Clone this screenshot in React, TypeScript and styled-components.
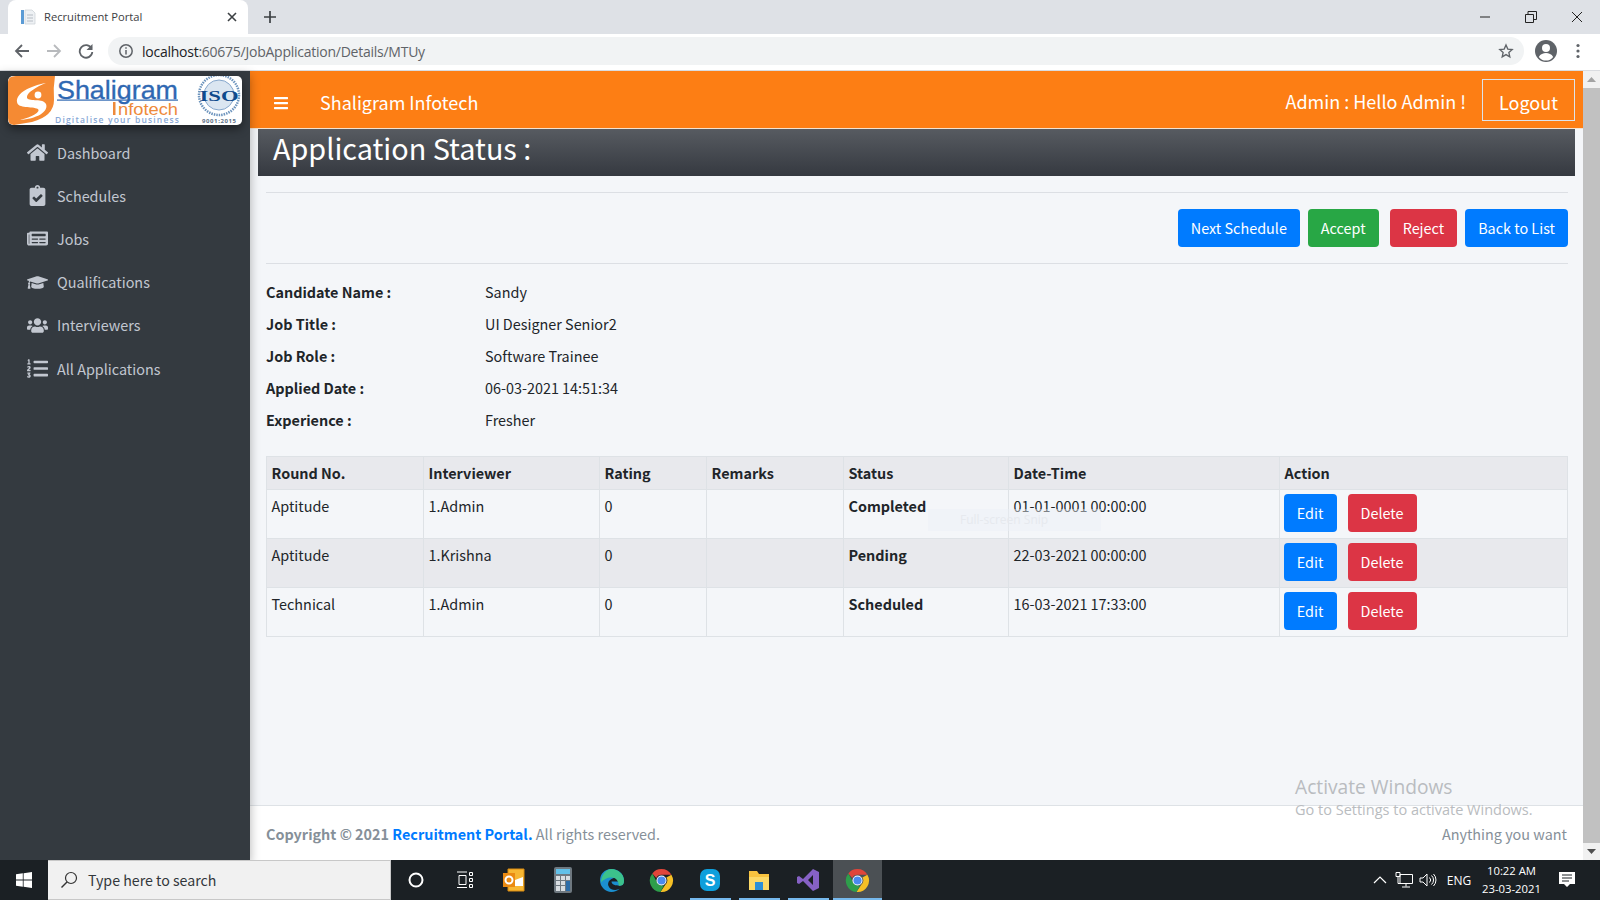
import React from "react";
import styled, { createGlobalStyle } from "styled-components";
import { FaHome, FaClipboardCheck, FaNewspaper, FaGraduationCap, FaUsers, FaListOl, FaBars } from "react-icons/fa";

const Global = createGlobalStyle`
  html, body { margin: 0; padding: 0; height: 100%; overflow: hidden; }
  body { font-family: "Noto Sans CJK SC", "Noto Sans", sans-serif; background: #fff; }
  * { box-sizing: border-box; }
`;
const Screen = styled.div`width:1600px;height:900px;display:flex;flex-direction:column;position:relative;overflow:hidden;`;

const TabStrip = styled.div`height:34px;background:#dee1e6;display:flex;align-items:flex-end;padding-left:8px;flex:none;`;
const Tab = styled.div`width:240px;height:34px;background:#fff;border-radius:8px 8px 0 0;display:flex;align-items:center;padding:0 8px 0 12px;gap:8px;
  font:11.2px "Open Sans","Noto Sans",sans-serif;color:#3c4043;`;
const TabTitle = styled.span`flex:1;white-space:nowrap;margin-top:-1px;`;
const NewTab = styled.div`width:44px;height:34px;display:flex;align-items:center;justify-content:center;`;
const WinControls = styled.div`margin-left:auto;height:34px;display:flex;align-items:center;`;
const WinBtn = styled.div`width:46px;height:28px;display:flex;align-items:center;justify-content:center;`;
const Toolbar = styled.div`height:37px;background:#fff;border-bottom:1px solid #dadce0;display:flex;align-items:center;padding:0 8px 2px 0;flex:none;`;
const NavIcon = styled.div`width:32px;height:28px;display:flex;align-items:center;justify-content:center;`;
const NavIcons = styled.div`display:flex;padding-left:6px;`;
const Omnibox = styled.div`flex:1;height:28px;margin-left:6px;background:#f1f3f4;border-radius:14px;display:flex;align-items:center;padding:0 10px 0 10px;
  font:14px "Open Sans","Noto Sans",sans-serif;letter-spacing:-.25px;color:#5f6368;`;
const Host = styled.span`color:#202124;margin-left:8px;`;
const OmniStar = styled.div`margin-left:auto;display:flex;`;
const Account = styled.div`display:flex;align-items:center;gap:18px;padding:0 12px 0 10px;`;

const Body = styled.div`flex:1;display:flex;min-height:0;`;
const Sidebar = styled.aside`width:250px;background:#343a40;flex:none;padding:5px 8px 0;position:relative;z-index:2;box-shadow:0 4px 10px rgba(0,0,0,.3);display:flex;flex-direction:column;`;
const LogoBox = styled.div`height:49px;width:234px;background:#fff;border-radius:5px;box-shadow:0 4px 10px rgba(0,0,0,.45);overflow:hidden;flex:none;margin-bottom:6px;`;
const Menu = styled.nav`display:flex;flex-direction:column;`;
const MenuItem = styled.a`height:43.2px;display:flex;align-items:center;color:#c2c7d0;font-size:14.4px;line-height:22px;`;
const MenuIcon = styled.span`width:49px;display:flex;justify-content:center;padding-left:9px;font-size:21px;color:#c2c7d0;`;

const Main = styled.div`flex:1;display:flex;flex-direction:column;min-width:0;background:#f4f6f9;position:relative;`;
const Navbar = styled.header`height:58px;background:#fd7e14;border-bottom:1px solid #f4e2d0;display:flex;align-items:center;padding:0 8px 0 23px;color:#fff;flex:none;`;
const Burger = styled(FaBars)`margin-top:6px;`;
const Brand = styled.span`font-size:18px;line-height:27px;margin-left:31px;padding-top:6px;`;
const Hello = styled.span`margin-left:auto;font-size:18px;line-height:27px;margin-right:16px;padding-top:4px;`;
const Logout = styled.button`width:93px;height:42px;border:1px solid #dde3ea;background:transparent;color:#fff;font:18px/27px "Noto Sans CJK SC","Noto Sans",sans-serif;padding:5px 0 0;`;
const Content = styled.main`flex:1;padding:0 15px 0 16px;display:flex;flex-direction:column;`;
const TitleBar = styled.h1`margin:0 -7px 0 -8px;height:47px;background:linear-gradient(#575b61,#353940);color:#fff;font-weight:400;font-size:28.8px;line-height:38px;padding:0 0 0 15px;flex:none;`;
const Rule = styled.hr`border:0;border-top:1px solid #dcdfe4;margin:0;flex:none;width:100%;`;
const TopRule = styled(Rule)`margin-top:16px;`;
const Actions = styled.div`display:flex;justify-content:flex-end;padding:16px 0;`;
const Btn = styled.button<{ $c: string; $ml?: number }>`height:38px;padding:0 13px;border:0;border-radius:4px;background:${p => p.$c};color:#fff;
  font:14.4px/24px "Noto Sans CJK SC","Noto Sans",sans-serif;margin-left:${p => p.$ml ?? 0}px;`;
const Details = styled.dl`display:grid;grid-template-columns:219px 1fr;grid-auto-rows:32px;margin:11px 0 21px;align-items:center;color:#212529;font-size:14.4px;`;
const Dt = styled.dt`font-weight:700;`;
const Dd = styled.dd`margin:0;`;
const Table = styled.table`width:1301px;border-collapse:collapse;table-layout:fixed;font-size:14.4px;color:#212529;`;
const Th = styled.th<{ $w: number }>`width:${p => p.$w}px;height:33px;background:#e8e9ed;border:1px solid #dee2e6;text-align:left;padding:0 5px 2px 4.5px;font-weight:700;`;
const Tr = styled.tr<{ $alt?: boolean }>`height:49px;background:${p => p.$alt ? "#e8e9ed" : "transparent"};`;
const Td = styled.td<{ $bold?: boolean }>`border:1px solid #dee2e6;padding:4px 5px 5px 4.5px;vertical-align:top;line-height:24px;font-weight:${p => p.$bold ? 700 : 400};`;
const ActionTd = styled(Td)`padding-left:3.5px;`;
const ActionCell = styled.div`display:flex;gap:11px;`;
const RowBtn = styled(Btn)<{ $w: number }>`padding:0;width:${p => p.$w}px;`;
const Footer = styled.footer`height:55px;background:#fff;border-top:1px solid #dee2e6;display:flex;align-items:center;justify-content:space-between;padding:0 16px;color:#869099;font-size:14.4px;flex:none;position:relative;`;
const Strong = styled.strong`font-weight:700;`;
const FootLink = styled.a`color:#007bff;font-weight:700;`;
const Scrollbar = styled.div`width:17px;background:#f1f1f1;flex:none;display:flex;flex-direction:column;align-items:center;`;
const ScrollArrow = styled.div`height:17px;display:flex;align-items:center;justify-content:center;flex:none;`;
const ScrollThumb = styled.div`flex:1;width:100%;background:#c1c1c1;`;

const Watermark = styled.div`position:absolute;left:1295px;top:774px;color:#b9bcc0;z-index:4;font-family:"Open Sans","Noto Sans",sans-serif;pointer-events:none;`;
const WmTitle = styled.div`font-size:19.2px;line-height:26px;`;
const WmSub = styled.div`font-size:14.5px;line-height:20px;`;
const Snip = styled.div`position:absolute;left:928px;top:509px;width:173px;height:22px;padding-left:32px;background:rgba(235,240,247,.45);color:#e6e9ee;font:12px/22px "Open Sans",sans-serif;z-index:4;pointer-events:none;`;

const Taskbar = styled.div`height:40px;background:#1b2024;display:flex;align-items:center;flex:none;color:#fff;position:relative;z-index:5;`;
const StartBtn = styled.div`width:48px;height:40px;display:flex;align-items:center;justify-content:center;`;
const SearchBox = styled.div`width:343px;height:40px;background:#f1f1f1;border:1px solid #c8c8c8;border-width:1px 1px 1px 0;display:flex;align-items:center;gap:10px;padding-left:12px;color:#33373b;font:14.2px "Noto Sans CJK SC","Noto Sans",sans-serif;`;
const TaskIcon = styled.div<{ $on?: boolean; $open?: boolean }>`width:49.1px;height:40px;display:flex;align-items:center;justify-content:center;position:relative;background:${p => p.$on ? "#4b5054" : "transparent"};
  &::after{content:"";display:${p => p.$open ? "block" : "none"};position:absolute;left:${p => p.$on ? 0 : 4}px;right:${p => p.$on ? 0 : 4}px;bottom:0;height:2px;background:#76b9ed;}`;
const Tray = styled.div`margin-left:auto;display:flex;align-items:center;height:40px;`;
const TrayIcon = styled.div`width:24px;display:flex;justify-content:center;`;
const Lang = styled.div`font:12px "Open Sans",sans-serif;width:38px;text-align:center;`;
const Clock = styled.div`font:11.3px/18px "Open Sans",sans-serif;text-align:center;width:67px;`;
const Notif = styled.div`width:55px;display:flex;justify-content:center;padding-right:11px;`;

const Logo = () => (
  <svg width="234" height="49" viewBox="0 0 234 49">
    <path d="M0 6 Q0 0 8 0 H47 Q45 12 46 24 Q46 40 24 46 L6 49 Q0 49 0 42Z" fill="#f58a33" />
    <path d="M38 7 C22 10 8 17 9 26 C10 33 24 30 30 33 C33 36 24 41 12 44 C28 43 41 36 38 28 C35 22 22 26 19 22 C18 17 28 11 38 7Z" fill="#fff" />
    <circle cx="30" cy="19" r="3.400" fill="#fff" />
    <text x="49" y="22.500" fontFamily="Liberation Sans, sans-serif" fontSize="25" fill="#2f68b2" stroke="#2f68b2" strokeWidth=".3" textLength="121" lengthAdjust="spacingAndGlyphs">Shaligram</text>
    <rect x="49" y="23.500" width="121" height="1.200" fill="#2f68b2" />
    <rect x="105" y="26" width="2.500" height="13" fill="#ee8a3a" />
    <text x="110" y="39" fontFamily="Liberation Sans, sans-serif" fontSize="17" fill="#ee8a3a" textLength="60" lengthAdjust="spacingAndGlyphs">nfotech</text>
    <text x="47" y="47" fontFamily="Open Sans, sans-serif" fontSize="8.500" fontWeight="600" fill="#88a8d6" textLength="124" lengthAdjust="spacing">Digitalise your business</text>
    <circle cx="211" cy="19" r="20" fill="none" stroke="#6d94bd" strokeWidth="2.500" strokeDasharray="1.500 1" />
    <circle cx="211" cy="19" r="15" fill="#dbe6f1" stroke="#86a7cc" />
    <text x="211" y="24.500" textAnchor="middle" fontFamily="Liberation Serif, serif" fontWeight="700" fontSize="15.500" fill="#0f4a8c" textLength="39" lengthAdjust="spacingAndGlyphs">ISO</text>
    <text x="211" y="46.500" textAnchor="middle" fontFamily="Open Sans, sans-serif" fontWeight="700" fontSize="6" fill="#5c6f85" textLength="34" lengthAdjust="spacing">9001:2015</text>
  </svg>
);

const Chrome = ({ s = 24 }: { s?: number }) => (
  <svg width={s} height={s} viewBox="0 0 24 24">
    <path d="M12 1a11 11 0 0 1 9.500 5.500H12a5.500 5.500 0 0 0-5 3L3.200 5.200A11 11 0 0 1 12 1z" fill="#e0453a" />
    <path d="M21.500 6.500A11 11 0 0 1 11 23l4.800-7.200a5.500 5.500 0 0 0 .9-6.800z" fill="#f6c026" />
    <path d="M11 23A11 11 0 0 1 3.200 5.200L7.800 14a5.500 5.500 0 0 0 6.800 2.400z" fill="#2e9e4b" />
    <circle cx="12" cy="12" r="4.800" fill="#fff" /><circle cx="12" cy="12" r="3.900" fill="#4a8af0" />
  </svg>
);

const rows = [
  ["Aptitude", "1.Admin", "0", "", "Completed", "01-01-0001 00:00:00"],
  ["Aptitude", "1.Krishna", "0", "", "Pending", "22-03-2021 00:00:00"],
  ["Technical", "1.Admin", "0", "", "Scheduled", "16-03-2021 17:33:00"],
];
const cols: [string, number][] = [["Round No.", 157], ["Interviewer", 176], ["Rating", 107], ["Remarks", 137], ["Status", 165], ["Date-Time", 271], ["Action", 288]];
const details = [["Candidate Name :", "Sandy"], ["Job Title :", "UI Designer Senior2"], ["Job Role :", "Software Trainee"], ["Applied Date :", "06-03-2021 14:51:34"], ["Experience :", "Fresher"]];
const menu: [React.ReactNode, string][] = [[<FaHome />, "Dashboard"], [<FaClipboardCheck />, "Schedules"], [<FaNewspaper />, "Jobs"], [<FaGraduationCap />, "Qualifications"], [<FaUsers />, "Interviewers"], [<FaListOl />, "All Applications"]];

export default function App() {
  return (
    <Screen>
      <Global />
      <TabStrip>
        <Tab>
          <svg width="16" height="16" viewBox="0 0 16 16"><rect x="1" y="1" width="3" height="14" fill="#5b9bd5" /><path d="M5 1h7l3 3v11H5z" fill="#eef1f4" stroke="#c9ced4" strokeWidth=".7" /><path d="M7 6h6M7 9h6M7 12h6" stroke="#b6bcc4" /></svg>
          <TabTitle>Recruitment Portal</TabTitle>
          <svg width="16" height="16" viewBox="0 0 16 16"><path d="M4 4l8 8M12 4l-8 8" stroke="#3c4043" strokeWidth="1.600" /></svg>
        </Tab>
        <NewTab><svg width="14" height="14" viewBox="0 0 14 14"><path d="M7 1v12M1 7h12" stroke="#3c4043" strokeWidth="1.700" /></svg></NewTab>
        <WinControls>
          <WinBtn><svg width="12" height="12"><path d="M1 6h10" stroke="#222" /></svg></WinBtn>
          <WinBtn><svg width="12" height="12"><path d="M.5 3.500h8v8h-8zM3 3V.5h8.500v8H9" fill="none" stroke="#222" /></svg></WinBtn>
          <WinBtn><svg width="12" height="12"><path d="M1 1l10 10M11 1L1 11" stroke="#222" /></svg></WinBtn>
        </WinControls>
      </TabStrip>
      <Toolbar>
        <NavIcons>
          <NavIcon><svg width="16" height="16" viewBox="0 0 16 16"><path d="M15 8H2.500M8 2L2 8l6 6" fill="none" stroke="#5f6368" strokeWidth="1.800" /></svg></NavIcon>
          <NavIcon><svg width="16" height="16" viewBox="0 0 16 16"><path d="M1 8h12.500M8 2l6 6-6 6" fill="none" stroke="#b8babd" strokeWidth="1.800" /></svg></NavIcon>
          <NavIcon><svg width="16" height="16" viewBox="0 0 16 16"><path d="M13.600 5.500A6.300 6.300 0 1 0 14.300 9" fill="none" stroke="#5f6368" strokeWidth="1.800" /><path d="M14.500 1v6h-6z" fill="#5f6368" /></svg></NavIcon>
        </NavIcons>
        <Omnibox>
          <svg width="16" height="16" viewBox="0 0 16 16"><circle cx="8" cy="8" r="6.200" fill="none" stroke="#5f6368" strokeWidth="1.500" /><path d="M8 7v4.500M8 4.300v1.500" stroke="#5f6368" strokeWidth="1.500" /></svg>
          <Host>localhost</Host>:60675/JobApplication/Details/MTUy
          <OmniStar><svg width="16" height="16" viewBox="0 0 24 24"><path d="M12 3l2.700 6.100 6.600.7-5 4.400 1.400 6.500L12 17.400l-5.700 3.300 1.400-6.500-5-4.400 6.600-.7z" fill="none" stroke="#5f6368" strokeWidth="2" /></svg></OmniStar>
        </Omnibox>
        <Account>
          <svg width="24" height="24" viewBox="0 0 24 24"><circle cx="12" cy="12" r="11" fill="#5f6368" /><circle cx="12" cy="9" r="4" fill="#fff" /><path d="M4.800 18c1.500-3 4.500-4 7.200-4s5.700 1 7.200 4a9 9 0 0 1-14.400 0z" fill="#fff" /></svg>
          <svg width="4" height="16" viewBox="0 0 4 16"><circle cx="2" cy="2.500" r="1.600" fill="#5f6368" /><circle cx="2" cy="8" r="1.600" fill="#5f6368" /><circle cx="2" cy="13.500" r="1.600" fill="#5f6368" /></svg>
        </Account>
      </Toolbar>
      <Body>
        <Sidebar>
          <LogoBox><Logo /></LogoBox>
          <Menu>
            {menu.map(([ic, t]) => <MenuItem key={t}><MenuIcon>{ic}</MenuIcon>{t}</MenuItem>)}
          </Menu>
        </Sidebar>
        <Main>
          <Navbar>
            <Burger size={16} />
            <Brand>Shaligram Infotech</Brand>
            <Hello>Admin : Hello Admin !</Hello>
            <Logout>Logout</Logout>
          </Navbar>
          <Content>
            <TitleBar>Application Status :</TitleBar>
            <TopRule />
            <Actions>
              <Btn $c="#007bff">Next Schedule</Btn>
              <Btn $c="#28a745" $ml={8}>Accept</Btn>
              <Btn $c="#dc3545" $ml={11}>Reject</Btn>
              <Btn $c="#007bff" $ml={8}>Back to List</Btn>
            </Actions>
            <Rule />
            <Details>
              {details.map(([a, b]) => <React.Fragment key={a}><Dt>{a}</Dt><Dd>{b}</Dd></React.Fragment>)}
            </Details>
            <Table>
              <thead><tr>{cols.map(([c, w]) => <Th key={c} $w={w}>{c}</Th>)}</tr></thead>
              <tbody>
                {rows.map((r, i) => (
                  <Tr key={i} $alt={i === 1}>
                    {r.map((c, j) => <Td key={j} $bold={j === 4}>{c}</Td>)}
                    <ActionTd>
                      <ActionCell>
                        <RowBtn $c="#007bff" $w={53}>Edit</RowBtn>
                        <RowBtn $c="#dc3545" $w={69}>Delete</RowBtn>
                      </ActionCell>
                    </ActionTd>
                  </Tr>
                ))}
              </tbody>
            </Table>
          </Content>
          <Footer>
            <span><Strong>Copyright © 2021 </Strong><FootLink>Recruitment Portal.</FootLink> All rights reserved.</span>
            <span>Anything you want</span>
          </Footer>
        </Main>
        <Scrollbar>
          <ScrollArrow><svg width="9" height="5"><path d="M4.500 0L9 5H0z" fill="#a3a3a3" /></svg></ScrollArrow>
          <ScrollThumb />
          <ScrollArrow><svg width="9" height="5"><path d="M0 0h9L4.500 5z" fill="#505050" /></svg></ScrollArrow>
        </Scrollbar>
      </Body>
      <Snip>Full-screen Snip</Snip>
      <Watermark><WmTitle>Activate Windows</WmTitle><WmSub>Go to Settings to activate Windows.</WmSub></Watermark>
      <Taskbar>
        <StartBtn><svg width="16" height="16" viewBox="0 0 16 16"><path d="M0 2.300l6.800-1v6.300H0zM7.600 1.200L16 0v7.600H7.600zM0 8.400h6.800v6.300l-6.800-1zM7.600 8.400H16V16l-8.400-1.200z" fill="#fff" /></svg></StartBtn>
        <SearchBox>
          <svg width="18" height="18" viewBox="0 0 18 18"><circle cx="11" cy="7" r="5.500" fill="none" stroke="#333" strokeWidth="1.200" /><path d="M7 11l-5.500 5.500" stroke="#333" strokeWidth="1.400" /></svg>
          Type here to search
        </SearchBox>
        <TaskIcon><svg width="16" height="16"><circle cx="8" cy="8" r="6.500" fill="none" stroke="#fff" strokeWidth="2" /></svg></TaskIcon>
        <TaskIcon><svg width="18" height="18" viewBox="0 0 18 18"><path d="M1 1h10M1 16.500h10M3 4.500h7v9H3zM13.500 1.500h3v3h-3zM13.500 7.500h3v3h-3zM13.500 13.500h3v3h-3z" fill="none" stroke="#fff" /></svg></TaskIcon>
        <TaskIcon><svg width="24" height="24" viewBox="0 0 24 24"><path d="M6 1h16v22H6z" fill="#f7b733" stroke="#d98a10" /><rect x="1" y="5" width="12" height="14" fill="#ea8a12" /><circle cx="7" cy="12" r="3.500" fill="none" stroke="#fff" strokeWidth="2" /><path d="M13 12l8-3v9h-8z" fill="#fff" /></svg></TaskIcon>
        <TaskIcon><svg width="18" height="26" viewBox="0 0 18 26"><rect width="18" height="26" rx="2" fill="#6e7880" /><rect x="2" y="2" width="14" height="5" fill="#62c0e8" /><path d="M2 9h4v4H2zM7 9h4v4H7zM12 9h4v4h-4zM2 14h4v4H2zM7 14h4v4H7zM2 19h4v5H2zM7 19h4v5H7z" fill="#d8dde1" /><rect x="12" y="14" width="4" height="10" fill="#2d6da8" /></svg></TaskIcon>
        <TaskIcon><svg width="25" height="25" viewBox="0 0 24 24"><path d="M12 1C5 1 1 6 1 12c0 6 5 11 11 11 3 0 6-1 8-3-4 2-10 1-11-3-1-3 1-6 4-7 3-1 6 0 6 3h-7c0 3 4 4 8 4 3 0 4-2 4-5C24 6 19 1 12 1z" fill="#1b8fd0" /><path d="M12 1c6 0 12 5 12 11 0 3-1 5-4 5h-1c0-5-3-8-7-8-4 0-8 2-10 5 0-7 5-13 10-13z" fill="#3cc28b" /></svg></TaskIcon>
        <TaskIcon><Chrome s={25} /></TaskIcon>
        <TaskIcon $open><svg width="22" height="24" viewBox="0 0 22 24"><rect x="1" y="1" width="20" height="22" rx="7" fill="#0e9fdc" /><text x="11" y="18" textAnchor="middle" fontFamily="Liberation Sans, sans-serif" fontWeight="700" fontSize="16" fill="#fff">S</text></svg></TaskIcon>
        <TaskIcon $open><svg width="22" height="22" viewBox="0 0 22 22"><path d="M1 2h8l2 3h10v16H1z" fill="#f8c33f" /><path d="M1 8h20v13H1z" fill="#fcd967" /><rect x="7" y="13" width="8" height="8" fill="#2b8fd8" /></svg></TaskIcon>
        <TaskIcon $open><svg width="24" height="24" viewBox="0 0 24 24"><path d="M17 1l6 3v16l-6 3L7 13l-4 3-2-1V9l2-1 4 3zM17 7l-5 5 5 5z" fill="#8661c5" /></svg></TaskIcon>
        <TaskIcon $on $open><Chrome s={25} /></TaskIcon>
        <Tray>
          <TrayIcon><svg width="14" height="10" viewBox="0 0 14 10"><path d="M1 8l6-6 6 6" fill="none" stroke="#fff" strokeWidth="1.200" /></svg></TrayIcon>
          <TrayIcon><svg width="18" height="16" viewBox="0 0 18 16"><path d="M1 .5h4v4H1zM5 2.500h12.500v9h-12.500zM3 4.500v7h2M11 11.500v3M7 15h8" fill="none" stroke="#fff" /></svg></TrayIcon>
          <TrayIcon><svg width="18" height="14" viewBox="0 0 18 14"><path d="M1 5h3l4-4v12l-4-4H1zM10.500 4.500a3.500 3.500 0 0 1 0 5M12.500 2.500a6 6 0 0 1 0 9M14.500 1a8.500 8.500 0 0 1 0 12" fill="none" stroke="#fff" /></svg></TrayIcon>
          <Lang>ENG</Lang>
          <Clock>10:22 AM<br />23-03-2021</Clock>
          <Notif><svg width="16" height="16" viewBox="0 0 16 16"><path d="M0 0h16v12h-5l-3 3-3-3H0z" fill="#fff" /><path d="M3 3h10M3 6h10M3 9h7" stroke="#1b2024" /></svg></Notif>
        </Tray>
      </Taskbar>
    </Screen>
  );
}
